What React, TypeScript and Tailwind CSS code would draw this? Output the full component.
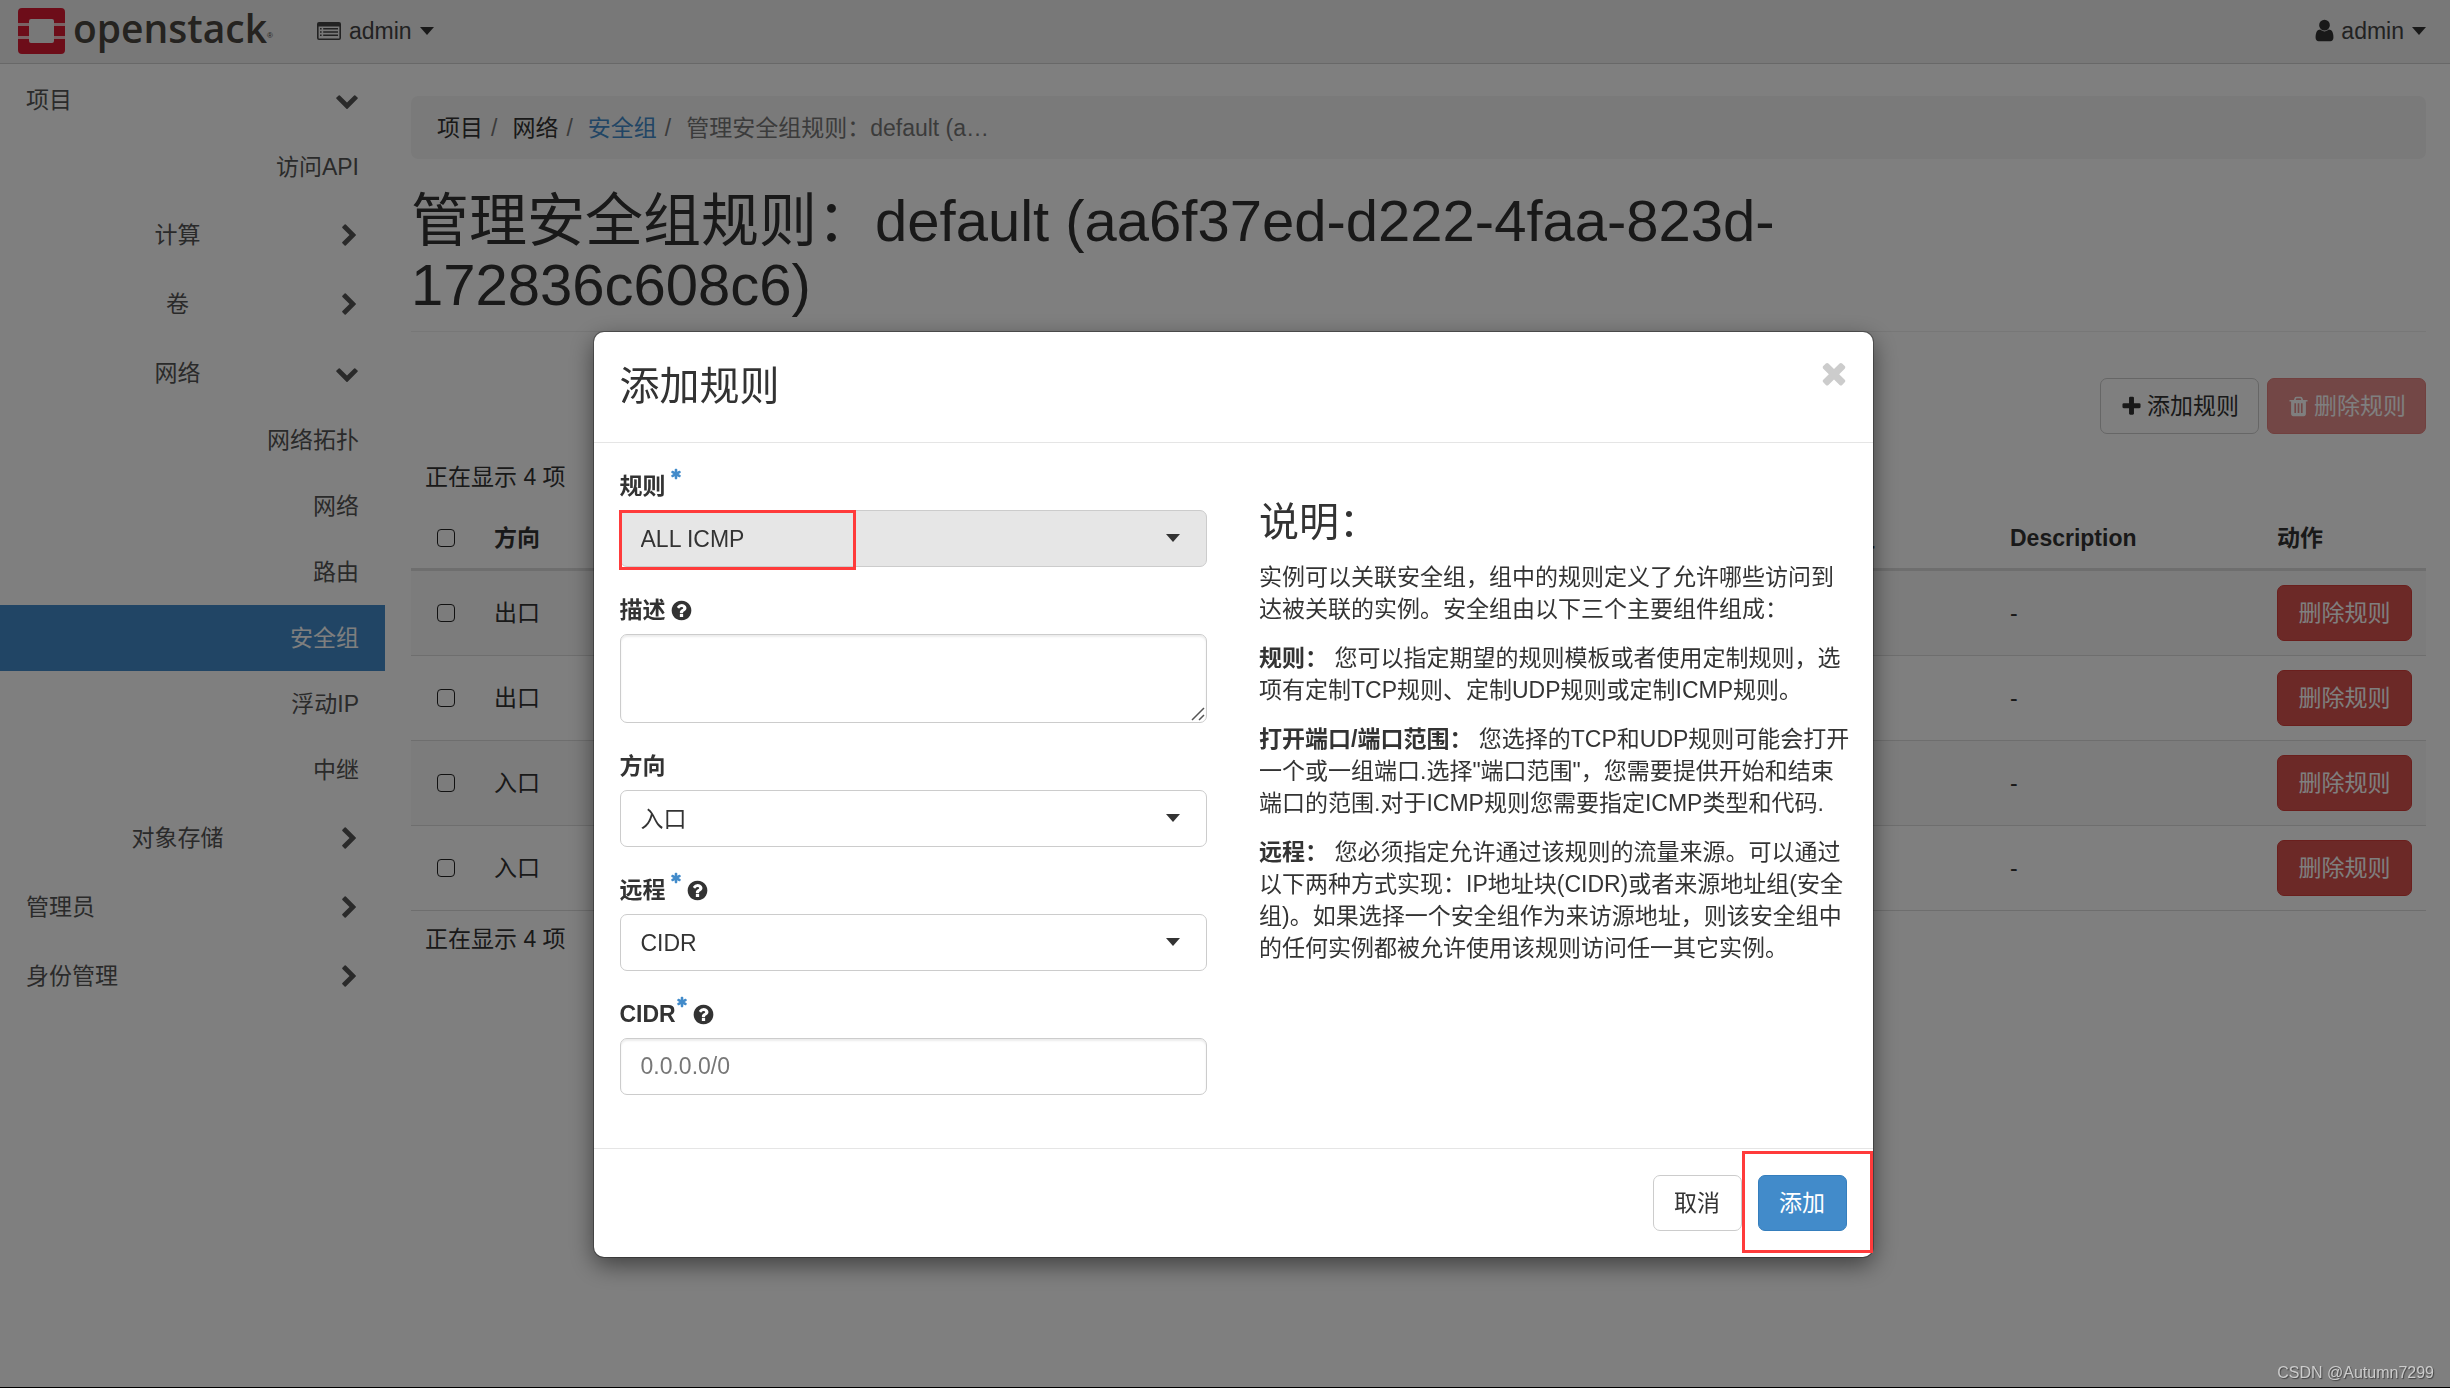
import { useState, type ReactNode } from 'react';
import clsx from 'clsx';

const ICONS = {
  plus: 'M1600 736v192q0 40-28 68t-68 28h-416v416q0 40-28 68t-68 28h-192q-40 0-68-28t-28-68v-416h-416q-40 0-68-28t-28-68v-192q0-40 28-68t68-28h416v-416q0-40 28-68t68-28h192q40 0 68 28t28 68v416h416q40 0 68 28t28 68z',
  close:
    'M1490 1322q0 40-28 68l-136 136q-28 28-68 28t-68-28l-294-294-294 294q-28 28-68 28t-68-28l-136-136q-28-28-28-68t28-68l294-294-294-294q-28-28-28-68t28-68l136-136q28-28 68-28t68 28l294 294 294-294q28-28 68-28t68 28l136 136q28 28 28 68t-28 68l-294 294 294 294q28 28 28 68z',
  chevron:
    'M1683 808l-742 741q-19 19-45 19t-45-19l-742-741q-19-19-19-45.500t19-45.500l166-165q19-19 45-19t45 19l531 531 531-531q19-19 45-19t45 19l166 165q19 19 19 45.500t-19 45.500z',
  user: 'M1536 1399q0 109-62.500 187t-150.500 78h-854q-88 0-150.500-78t-62.500-187q0-85 8.500-160.500t31.500-152 58.500-131 94-89 134.500-34.500q131 128 313 128t313-128q76 0 134.500 34.500t94 89 58.500 131 31.500 152 8.500 160.500zm-256-887q0 159-112.500 271.500t-271.500 112.500-271.500-112.500-112.500-271.500 112.500-271.500 271.500-112.500 271.500 112.500 112.500 271.500z',
  trash:
    'M704 1376v-704q0-14-9-23t-23-9h-64q-14 0-23 9t-9 23v704q0 14 9 23t23 9h64q14 0 23-9t9-23zm256 0v-704q0-14-9-23t-23-9h-64q-14 0-23 9t-9 23v704q0 14 9 23t23 9h64q14 0 23-9t9-23zm256 0v-704q0-14-9-23t-23-9h-64q-14 0-23 9t-9 23v704q0 14 9 23t23 9h64q14 0 23-9t9-23zm-544-992h448l-48-117q-7-9-17-11h-317q-10 2-17 11zm928 32v64q0 14-9 23t-23 9h-96v948q0 83-47 143.500t-113 60.500h-832q-66 0-113-58.500t-47-141.500v-952h-96q-14 0-23-9t-9-23v-64q0-14 9-23t23-9h309l70-167q15-37 54-63t79-26h320q40 0 79 26t54 63l70 167h309q14 0 23 9t9 23z',
  asterisk:
    'M1546 1050q46 26 59.500 77.500t-12.500 97.500l-64 110q-26 46-77.500 59.500t-97.500-12.500l-266-153v307q0 52-38 90t-90 38h-128q-52 0-90-38t-38-90v-307l-266 153q-46 26-97.500 12.500t-77.500-59.500l-64-110q-26-46-12.500-97.500t59.500-77.500l266-154-266-154q-46-26-59.500-77.500t12.500-97.500l64-110q26-46 77.500-59.500t97.500 12.500l266 153v-307q0-52 38-90t90-38h128q52 0 90 38t38 90v307l266-153q46-26 97.500-12.500t77.500 59.500l64 110q26 46 12.500 97.500t-59.500 77.500l-266 154z',
  help: 'M1024 1376v-192q0-14-9-23t-23-9h-192q-14 0-23 9t-9 23v192q0 14 9 23t23 9h192q14 0 23-9t9-23zm256-672q0-88-55.500-163t-138.500-116-170-41q-243 0-371 213-15 24 8 42l132 100q7 6 19 6 16 0 25-12 53-68 86-92 34-24 86-24 48 0 85.500 26t37.500 59q0 38-20 61t-68 45q-63 28-115.500 86.500t-52.500 125.500v36q0 14 9 23t23 9h192q14 0 23-9t9-23q0-19 21.500-49.500t54.500-49.500q32-18 49-28.500t46-35 44.500-48 28-60.500 12.500-81zm384 192q0 209-103 385.500t-279.500 279.500-385.500 103-385.500-103-279.500-279.500-103-385.500 103-385.500 279.500-279.500 385.500-103 385.500 103 279.500 279.500 103 385.500z',
};

function Icon({ name, className }: { name: keyof typeof ICONS; className?: string }) {
  return (
    <svg viewBox="0 0 1792 1792" className={clsx('shrink-0', className)} fill="currentColor" aria-hidden="true">
      <path d={ICONS[name]} />
    </svg>
  );
}

function Caret({ className }: { className?: string }) {
  return (
    <svg viewBox="0 0 14 8" className={clsx('h-2 w-3.5 shrink-0', className)} fill="currentColor" aria-hidden="true">
      <path d="M0 0h14L7 8z" />
    </svg>
  );
}

function ListIcon() {
  return (
    <svg viewBox="0 0 24 18" className="h-[18px] w-6 shrink-0" fill="currentColor" aria-hidden="true">
      <path
        fillRule="evenodd"
        d="M2 0h20a2 2 0 0 1 2 2v14a2 2 0 0 1-2 2H2a2 2 0 0 1-2-2V2a2 2 0 0 1 2-2zm-.4 4.500V16a.5.5 0 0 0 .5.5h19.800a.5.5 0 0 0 .5-.5V4.500z"
      />
      <path d="M3 6h1.600v1.400H3zM3 9.300h1.600v1.400H3zM3 12.600h1.600V14H3zM6.200 6H21v1.400H6.200zM6.200 9.300H21v1.400H6.200zM6.200 12.600H21V14H6.200z" />
    </svg>
  );
}

function Logo() {
  return (
    <a href="#home" aria-label="openstack" className="flex items-start gap-2 text-[#4a4640]">
      <svg viewBox="0 0 47 46" className="h-[46px] w-[47px] shrink-0" aria-hidden="true">
        <g fill="#da1a32">
          <path d="M4 0h39a4 4 0 0 1 4 4v11H36v-2a2 2 0 0 0-2-2H13a2 2 0 0 0-2 2v2H0V4a4 4 0 0 1 4-4z" />
          <path d="M0 18h11v10H0zM36 18h11v10H36z" />
          <path d="M0 31h11v2a2 2 0 0 0 2 2h21a2 2 0 0 0 2-2v-2h11v11a4 4 0 0 1-4 4H4a4 4 0 0 1-4-4z" />
        </g>
        <path d="M0 15h11v3H0zM36 15h11v3H36zM0 28h11v3H0zM36 28h11v3H36z" fill="#f3c6cb" />
      </svg>
      <span className="flex items-end">
        <span className="font-['Open_Sans',sans-serif] text-[39px] font-semibold leading-10">openstack</span>
        <span className="text-[8px] leading-6">®</span>
      </span>
    </a>
  );
}

type NavItem = { label: string; level: 0 | 1 | 2; open?: boolean; active?: boolean };

const NAV: NavItem[] = [
  { label: '项目', level: 0, open: true },
  { label: '访问API', level: 2 },
  { label: '计算', level: 1 },
  { label: '卷', level: 1 },
  { label: '网络', level: 1, open: true },
  { label: '网络拓扑', level: 2 },
  { label: '网络', level: 2 },
  { label: '路由', level: 2 },
  { label: '安全组', level: 2, active: true },
  { label: '浮动IP', level: 2 },
  { label: '中继', level: 2 },
  { label: '对象存储', level: 1 },
  { label: '管理员', level: 0 },
  { label: '身份管理', level: 0 },
];

function Sidebar() {
  return (
    <nav className="w-[385px] shrink-0 pt-px text-[#555]">
      {NAV.map((item, i) =>
        item.level === 2 ? (
          <a
            key={i}
            href="#panel"
            className={clsx(
              'flex h-[66px] items-center justify-end px-[26px]',
              item.active && 'bg-[#428bca] text-white'
            )}
          >
            {item.label}
          </a>
        ) : (
          <button key={i} type="button" className="flex h-[69px] w-full items-center px-[26px]">
            <span className={clsx('flex-1', item.level === 0 ? 'text-left' : 'text-center')}>{item.label}</span>
            <Icon name="chevron" className={clsx('ml-1.5 h-6 w-6', !item.open && '-rotate-90')} />
          </button>
        )
      )}
    </nav>
  );
}

const RULES = ['出口', '出口', '入口', '入口'];

function Checkbox({ label }: { label: string }) {
  return (
    <input
      type="checkbox"
      aria-label={label}
      className="block h-[18px] w-[18px] appearance-none rounded-[4px] border border-[#222]"
    />
  );
}

function RulesTable() {
  return (
    <table className="w-full table-fixed border-separate border-spacing-0 text-left">
      <colgroup>
        <col className="w-[69px]" />
        <col />
        <col className="w-[250px]" />
        <col className="w-[267px]" />
        <col className="w-[163px]" />
      </colgroup>
      <thead>
        <tr className="h-[63px] [&>th]:border-b-3 [&>th]:border-[#ddd]">
          <th className="pl-[26px]">
            <Checkbox label="全选" />
          </th>
          <th className="px-3.5">方向</th>
          <th className="px-3.5">远端安全组</th>
          <th className="px-3.5">Description</th>
          <th className="px-3.5">动作</th>
        </tr>
      </thead>
      <tbody>
        {RULES.map((direction, i) => (
          <tr key={i} className="odd:bg-[#f9f9f9] [&>td]:border-b [&>td]:border-[#ddd]">
            <td className="pl-[26px]">
              <Checkbox label={`选择规则 ${i + 1}`} />
            </td>
            <td className="px-3.5">{direction}</td>
            <td className="px-3.5" />
            <td className="px-3.5">-</td>
            <td className="p-3.5">
              <button
                type="button"
                className="block h-14 w-full rounded-[7px] border border-[#d43f3a] bg-[#d9534f] text-white"
              >
                删除规则
              </button>
            </td>
          </tr>
        ))}
      </tbody>
    </table>
  );
}

function Field({
  id,
  label,
  required,
  help,
  children,
}: {
  id: string;
  label: string;
  required?: boolean;
  help?: boolean;
  children: ReactNode;
}) {
  return (
    <div>
      <label htmlFor={id} className="mb-2 flex h-8 items-center font-bold">
        {label}
        {required && (
          <Icon
            name="asterisk"
            className={clsx('-mt-0.5 h-3 w-3 self-start text-[#428bca]', label !== 'CIDR' && 'ml-1')}
          />
        )}
        {help && <Icon name="help" className="ml-1 h-[23px] w-[23px]" />}
      </label>
      {children}
    </div>
  );
}

function SelectBox({ id, options, shaded }: { id: string; options: string[]; shaded?: boolean }) {
  return (
    <div className="relative">
      <select
        id={id}
        className={clsx(
          'block h-[57px] w-full appearance-none rounded-[7px] border border-[#ccc] pl-5 pr-12',
          shaded ? 'bg-[#e6e6e6]' : 'bg-white'
        )}
      >
        {options.map((option) => (
          <option key={option}>{option}</option>
        ))}
      </select>
      <Caret className="pointer-events-none absolute right-[27px] top-6" />
    </div>
  );
}

function AddRuleModal() {
  const [cidr, setCidr] = useState('');

  return (
    <div className="fixed inset-0 flex items-start justify-center bg-black/50 pl-4 pt-[332px]">
      <div
        role="dialog"
        aria-modal="true"
        aria-labelledby="modal-title"
        className="w-[1279px] max-w-full rounded-[10px] bg-white shadow-[0_0_0_1px_rgba(0,0,0,0.3),0_8px_24px_rgba(0,0,0,0.5)]"
      >
        {/* Header */}
        <div className="flex items-start justify-between border-b border-[#e5e5e5] px-[26px] pb-[26px] pt-6">
          <h3 id="modal-title" className="text-[40px] leading-[60px]">
            添加规则
          </h3>
          <button type="button" aria-label="关闭" className="-mr-1 text-[#ccc]">
            <Icon name="close" className="h-[34px] w-[34px]" />
          </button>
        </div>

        {/* Body */}
        <div className="grid grid-cols-2 gap-[52px] px-[26px] pb-[53px] pt-[27px]">
          <form id="add-rule" className="flex flex-col gap-[27px]">
            <Field id="rule" label="规则" required>
              <div className="relative">
                <SelectBox id="rule" options={['ALL ICMP']} shaded />
                <div className="pointer-events-none absolute -left-px top-0 h-[60px] w-[237px] border-3 border-[#ff3b3b]" />
              </div>
            </Field>
            <Field id="description" label="描述" help>
              <div className="relative">
                <textarea
                  id="description"
                  className="block h-[89px] w-full resize-none rounded-[7px] border border-[#ccc] px-5 py-2 shadow-[inset_0_2px_2px_rgba(0,0,0,0.075)]"
                />
                <svg
                  viewBox="0 0 14 14"
                  className="pointer-events-none absolute bottom-0.5 right-0.5 h-3.5 w-3.5"
                  fill="none"
                  stroke="#555"
                  strokeWidth="1.500"
                  aria-hidden="true"
                >
                  <path d="M1 13 13 1M8 13l5-5" />
                </svg>
              </div>
            </Field>
            <Field id="direction" label="方向">
              <SelectBox id="direction" options={['入口']} />
            </Field>
            <Field id="remote" label="远程" required help>
              <SelectBox id="remote" options={['CIDR']} />
            </Field>
            <Field id="cidr" label="CIDR" required help>
              <input
                id="cidr"
                type="text"
                value={cidr}
                onChange={(e) => setCidr(e.target.value)}
                placeholder="0.0.0.0/0"
                className="block h-[57px] w-full rounded-[7px] border border-[#ccc] px-5 shadow-[inset_0_2px_2px_rgba(0,0,0,0.075)] placeholder:text-[#777]"
              />
            </Field>
          </form>

          <div className="-mr-1 flex flex-col gap-[17px] pt-[30px]">
            <h3 className="text-[40px] leading-[44px]">说明：</h3>
            <p>实例可以关联安全组，组中的规则定义了允许哪些访问到达被关联的实例。安全组由以下三个主要组件组成：</p>
            <p>
              <b>规则：</b> 您可以指定期望的规则模板或者使用定制规则，选项有定制TCP规则、定制UDP规则或定制ICMP规则。
            </p>
            <p>
              <b>打开端口/端口范围：</b>{' '}
              您选择的TCP和UDP规则可能会打开一个或一组端口.选择"端口范围"，您需要提供开始和结束端口的范围.对于ICMP规则您需要指定ICMP类型和代码.
            </p>
            <p>
              <b>远程：</b>{' '}
              您必须指定允许通过该规则的流量来源。可以通过以下两种方式实现：IP地址块(CIDR)或者来源地址组(安全组)。如果选择一个安全组作为来访源地址，则该安全组中的任何实例都被允许使用该规则访问任一其它实例。
            </p>
          </div>
        </div>

        {/* Footer */}
        <div className="flex justify-end gap-4 border-t border-[#e5e5e5] p-[26px]">
          <button type="button" className="h-14 w-[89px] rounded-[7px] border border-[#ccc] bg-white">
            取消
          </button>
          <div className="relative">
            <button
              type="submit"
              form="add-rule"
              className="block h-14 w-[89px] rounded-[7px] border border-[#357ebd] bg-[#428bca] text-white"
            >
              添加
            </button>
            <div className="pointer-events-none absolute -bottom-[22px] -left-4 -right-[26px] -top-6 border-3 border-[#ff3b3b]" />
          </div>
        </div>
      </div>
    </div>
  );
}

export default function App() {
  return (
    <div className="min-h-screen bg-white font-['Liberation_Sans','Noto_Sans_CJK_SC',sans-serif] text-[23px] leading-8 text-[#333]">
      <header className="flex h-16 items-center justify-between border-b border-[#d0d0d0] bg-[#f0f0f0] pb-0.5 pl-[18px] pr-6 text-[#444]">
        <div className="flex items-center gap-11">
          <Logo />
          <button type="button" className="flex items-center gap-2">
            <ListIcon />
            admin
            <Caret className="text-[#333]" />
          </button>
        </div>
        <button type="button" className="flex items-center gap-2">
          <Icon name="user" className="-mr-1 h-[25px] w-[25px] text-[#333]" />
          admin
          <Caret className="text-[#333]" />
        </button>
      </header>

      <div className="flex">
        <Sidebar />
        <main className="min-w-0 flex-1 pl-[26px] pr-6 pt-8">
          <ol className="mb-[30px] flex h-[63px] items-center rounded-[7px] bg-[#f5f5f5] px-[26px] text-[#777]">
            <li className="text-[#333]">项目</li>
            <li className="pl-2 pr-[15px]">/</li>
            <li className="text-[#333]">网络</li>
            <li className="pl-2 pr-[15px]">/</li>
            <li>
              <a href="#security-groups" className="text-[#428bca]">
                安全组
              </a>
            </li>
            <li className="pl-2 pr-[15px]">/</li>
            <li>管理安全组规则：default (a…</li>
          </ol>

          <div className="mb-[46px] border-b border-[#eee] pb-3.5">
            <h1 className="max-w-[1400px] text-[58px] leading-[64px]">
              管理安全组规则：default (aa6f37ed-d222-4faa-823d-172836c608c6)
            </h1>
          </div>

          <div className="mb-[27px] flex justify-end gap-2">
            <button
              type="button"
              className="flex h-14 items-center gap-1 rounded-[7px] border border-[#ccc] bg-white px-[19px]"
            >
              <Icon name="plus" className="h-[23px] w-[23px]" />
              添加规则
            </button>
            <button
              type="button"
              disabled
              className="flex h-14 items-center gap-1 rounded-[7px] border border-[#d43f3a] bg-[#d9534f] px-[19px] text-white opacity-65"
            >
              <Icon name="trash" className="h-[23px] w-[23px]" />
              删除规则
            </button>
          </div>

          <p className="mb-[15px] pl-3.5">正在显示 4 项</p>
          <RulesTable />
          <p className="pl-3.5 pt-3">正在显示 4 项</p>
        </main>
      </div>

      <AddRuleModal />

      <div className="pointer-events-none fixed inset-x-0 bottom-0 border-b border-black pb-1 pr-4 text-right text-[16px] leading-5 text-[#ccc] [text-shadow:1px_1px_1px_#444]">
        CSDN @Autumn7299
      </div>
    </div>
  );
}
